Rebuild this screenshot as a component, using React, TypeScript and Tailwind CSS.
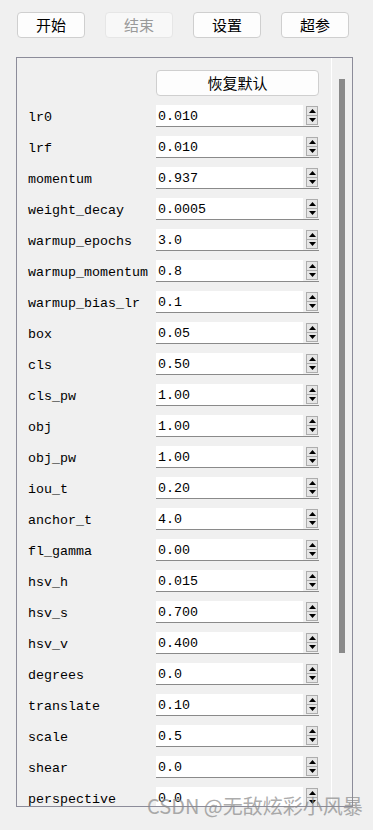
import React from "react";

const rows: [string, string][] = [
  ["lr0", "0.010"],
  ["lrf", "0.010"],
  ["momentum", "0.937"],
  ["weight_decay", "0.0005"],
  ["warmup_epochs", "3.0"],
  ["warmup_momentum", "0.8"],
  ["warmup_bias_lr", "0.1"],
  ["box", "0.05"],
  ["cls", "0.50"],
  ["cls_pw", "1.00"],
  ["obj", "1.00"],
  ["obj_pw", "1.00"],
  ["iou_t", "0.20"],
  ["anchor_t", "4.0"],
  ["fl_gamma", "0.00"],
  ["hsv_h", "0.015"],
  ["hsv_s", "0.700"],
  ["hsv_v", "0.400"],
  ["degrees", "0.0"],
  ["translate", "0.10"],
  ["scale", "0.5"],
  ["shear", "0.0"],
  ["perspective", "0.0"],
];

const mono = { fontFamily: '"Liberation Mono", "DejaVu Sans Mono", monospace' };
const cjk = { fontFamily: '"Noto Sans CJK SC", "Noto Sans", sans-serif' };

function Arrow({ up }: { up: boolean }) {
  return (
    <svg width="7" height="4" viewBox="0 0 7 4" className="block">
      {up ? <polygon points="0,4 7,4 3.5,0" fill="#000" /> : <polygon points="0,0 7,0 3.5,4" fill="#000" />}
    </svg>
  );
}

function SpinBox({ value }: { value: string }) {
  return (
    <div className="flex h-[22px] w-[163px] border-b border-[#8a8a8a]">
      <div className="flex w-[147px] items-center bg-white pl-[2px] pt-[3px] text-[13.33px] leading-[16px] text-black" style={mono}>
        {value}
      </div>
      <div className="flex w-[16px] flex-col gap-0 pl-[3px] pr-[1px] pt-[1px]">
        <div className="flex h-[10px] w-[12px] items-center justify-center border border-[#adadad] bg-[#e6e6e6]">
          <Arrow up />
        </div>
        <div className="flex h-[9px] w-[12px] items-center justify-center border border-t-0 border-[#adadad] bg-[#e6e6e6]">
          <Arrow up={false} />
        </div>
      </div>
    </div>
  );
}

function TopButton({ label, disabled }: { label: string; disabled?: boolean }) {
  return (
    <div
      className={
        disabled
          ? "flex h-[26px] w-[68px] items-center justify-center rounded-[4px] border border-[#e6e6e6] bg-[#f8f8f8] text-[15px] text-[#9a9a9a]"
          : "flex h-[26px] w-[68px] items-center justify-center rounded-[4px] border border-[#cfcfcf] bg-[#fdfdfd] text-[15px] text-black"
      }
      style={cjk}
    >
      {label}
    </div>
  );
}

export default function App() {
  return (
    <div className="relative h-[830px] w-[373px] overflow-hidden bg-[#f0f0f0]">
      <div className="flex gap-[20px] pl-[17px] pt-[12px]">
        <TopButton label="开始" />
        <TopButton label="结束" disabled />
        <TopButton label="设置" />
        <TopButton label="超参" />
      </div>

      <div className="ml-[16px] mt-[19px] flex h-[750px] w-[337px] overflow-hidden border border-[#8c8c9a]">
        <div className="flex w-[314px] flex-col gap-[9px] pt-[12px]">
          <div className="ml-[139px] flex h-[26px] w-[163px] shrink-0 items-center justify-center rounded-[4px] border border-[#cfcfcf] bg-[#fdfdfd] text-[15px] text-black" style={cjk}>
            恢复默认
          </div>
          {rows.map(([k, v]) => (
            <div key={k} className="flex h-[22px] shrink-0 items-center">
              <div className="w-[139px] pl-[11px] pt-[4px] text-[13.33px] leading-[16px] text-black" style={mono}>
                {k}
              </div>
              <SpinBox value={v} />
            </div>
          ))}
        </div>
        <div className="w-px bg-white" />
        <div className="w-[20px] pt-[21px]">
          <div className="ml-[7px] h-[574px] w-[6px] bg-[#8a8a8a]" />
        </div>
      </div>

      <div
        className="absolute left-[147px] top-[794px] whitespace-nowrap text-[20px] leading-[24px] text-[#8a8a8a] opacity-70"
        style={{ fontFamily: '"Noto Sans CJK SC", "Liberation Sans", sans-serif' }}
      >
        CSDN @无敌炫彩小风暴
      </div>
    </div>
  );
}
